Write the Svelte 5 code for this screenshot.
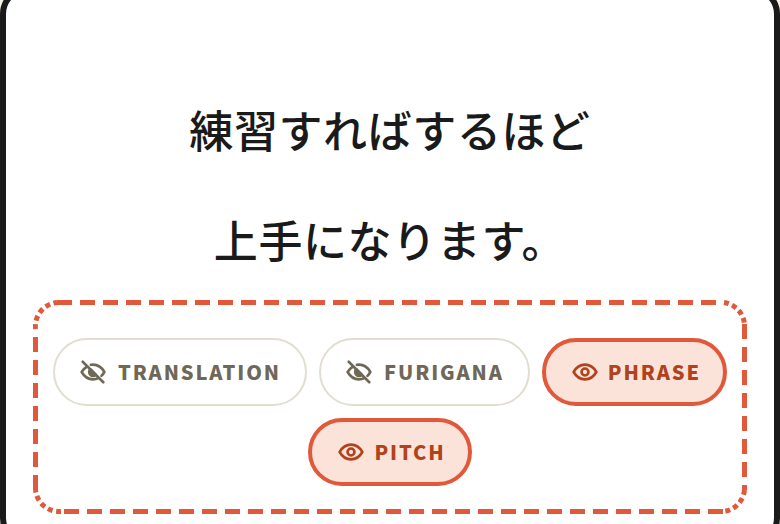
<script>
    const toggles = [
        { label: "TRANSLATION", on: false },
        { label: "FURIGANA", on: false },
        { label: "PHRASE", on: true },
        { label: "PITCH", on: true },
    ];
</script>

<div class="card">
    <div class="sentence">
        <p>練習すればするほど</p>
        <p>上手になります。</p>
    </div>

    <div class="toggles">
        <!-- the dash rhythm differs from what a css dashed border gives, so it is drawn -->
        <svg class="frame" viewBox="0 0 714 214" width="714" height="214" fill="none" stroke="#e0593a" stroke-width="5">
            <path stroke-dasharray="15 8" d="M24 2.500H691M2.500 37V190M711.500 24V190M31 211.500H691" />
            <path stroke-dasharray="5 3.500" d="M2.500 29A24 24 0 0 1 24 2.500M691 2.500A24 24 0 0 1 711.500 24M711.500 190A24 24 0 0 1 691 211.500M28 211.500A24 24 0 0 1 2.500 190" />
        </svg>

        {#each toggles as t}
            <button class="pill" class:on={t.on}>
                <svg viewBox="0 0 24 24" width="26" height="26" fill="none" stroke="currentColor" stroke-width="2.400" stroke-linejoin="round" stroke-linecap="round">
                    {#if t.on}
                        <path d="M1.500 12C4 7.600 7.600 5.200 12 5.200s8 2.400 10.500 6.800C20 16.400 16.400 18.800 12 18.800S4 16.400 1.500 12z" />
                        <circle cx="12" cy="12" r="3.200" />
                    {:else}
                        <path d="M6 7.200C4.200 8.300 2.800 9.900 1.500 12 4 16.400 7.600 18.800 12 18.800c1.800 0 3.500-.4 5-1.200M10 5.400c.7-.1 1.300-.2 2-.2 4.400 0 8 2.400 10.500 6.800-.8 1.400-1.700 2.600-2.700 3.600" />
                        <path d="M9.500 9.500a3.500 3.500 0 0 0 5 5z" fill="currentColor" />
                        <path d="M2.500 2.500l19 19" />
                    {/if}
                </svg>
                <span>{t.label}</span>
            </button>
        {/each}
    </div>
</div>

<style>
    :global(body) {
        margin: 0;
        background: #f6f1e7;
        overflow: hidden;
    }

    .card {
        box-sizing: border-box;
        width: 780px;
        height: 560px;
        margin-top: -14px;
        padding: 0 27px;
        background: #ffffff;
        border: 6px solid #1a1a1a;
        border-radius: 28px;
        font-family: "Noto Sans CJK JP", sans-serif;
    }

    .sentence {
        padding-top: 82px;
        text-align: center;
        color: #1a1a1a;
        font-size: 44px;
        font-weight: 500;
        letter-spacing: 0.6px;
    }

    .sentence p {
        margin: 0;
        height: 110px;
        line-height: 110px;
    }

    .toggles {
        position: relative;
        box-sizing: border-box;
        height: 214px;
        margin-top: 6px;
        padding: 38px 16px 0;
        display: flex;
        flex-wrap: wrap;
        justify-content: center;
        align-content: flex-start;
        gap: 12px;
    }

    .frame {
        position: absolute;
        left: 0;
        top: 0;
    }

    .pill {
        box-sizing: border-box;
        height: 68px;
        padding: 0 24px 0 25px;
        display: flex;
        align-items: center;
        gap: 12px;
        background: #ffffff;
        border: 2px solid #e2decf;
        border-radius: 34px;
        color: #6f6857;
        font-family: inherit;
        font-size: 20px;
        font-weight: 900;
        letter-spacing: 1.9px;
    }

    .pill span {
        margin-bottom: 2px;
    }

    .pill.on {
        padding: 0 22px 0 26px;
        gap: 10px;
        background: #fce3da;
        border: 4px solid #e0593a;
        color: #b0431c;
    }
</style>
